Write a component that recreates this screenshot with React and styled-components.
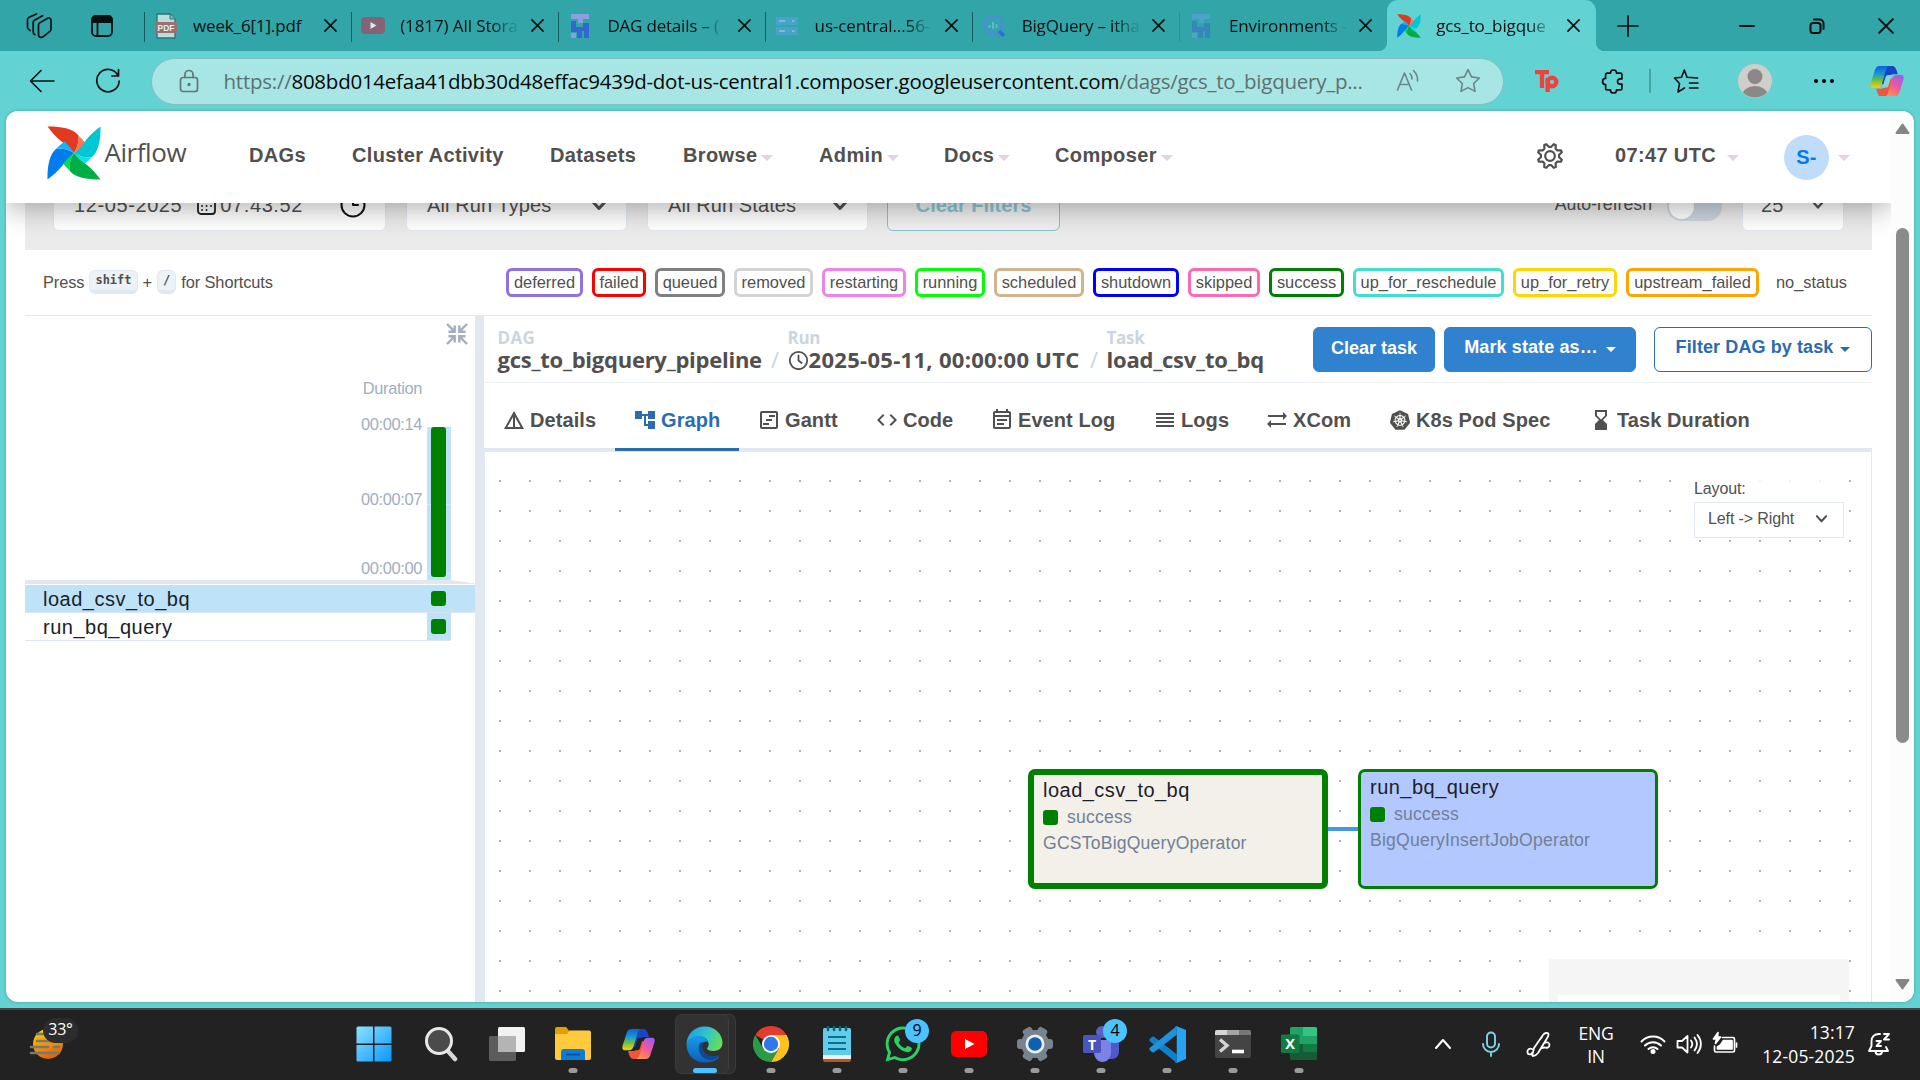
import React from "react";
import styled, { createGlobalStyle, css } from "styled-components";
import {
  MdDetails,
  MdAccountTree,
  MdCode,
  MdOutlineEventNote,
  MdReorder,
  MdSyncAlt,
  MdHourglassBottom,
  MdOutlineViewTimeline,
} from "react-icons/md";
import { SiKubernetes } from "react-icons/si";
import { FaWhatsapp } from "react-icons/fa";

const sans = `"Liberation Sans", Arial, sans-serif`;
const ui = `"Open Sans", "Noto Sans", sans-serif`;

const Global = createGlobalStyle`
  * { box-sizing: border-box; }
  html, body { margin: 0; overflow: hidden; background: #62d2d2; }
  svg { display: block; flex: none; }
`;

const Screen = styled.div`
  width: 1920px;
  height: 1080px;
  display: flex;
  flex-direction: column;
  background: #62d2d2;
  font-family: ${sans};
  color: #51504f;
  overflow: hidden;
  white-space: nowrap;
`;

const Cell = styled.div`
  width: ${(p) => p.$w}px;
  height: 100%;
  flex: none;
  display: flex;
  align-items: center;
  justify-content: center;
`;

/* ---------- browser chrome ---------- */

const TabStrip = styled.div`
  height: 51px;
  flex: none;
  display: flex;
  align-items: center;
  background: #31a5a8;
  font-family: ${ui};
  font-size: 17px;
  color: #0b0f10;
`;

const TabList = styled.div`
  display: flex;
  height: 100%;
  margin-left: 17.5px;
`;

const Tab = styled.div`
  width: ${(p) => (p.$active ? 209 : 207.2)}px;
  height: 51px;
  flex: none;
  display: flex;
  align-items: center;
  position: relative;
  ${(p) =>
    p.$active
      ? css`
          background: #62d2d2;
          border-radius: 11px 11px 0 0;
          &::before,
          &::after {
            content: "";
            position: absolute;
            bottom: 0;
            width: 9px;
            height: 9px;
          }
          &::before {
            left: -9px;
            background: radial-gradient(circle at 0 0, transparent 9px, #62d2d2 9.5px);
          }
          &::after {
            right: -9px;
            background: radial-gradient(circle at 100% 0, transparent 9px, #62d2d2 9.5px);
          }
        `
      : css`
          background: linear-gradient(${p.$faint ? "#2b8f93" : "#175a5e"}, ${p.$faint ? "#2b8f93" : "#175a5e"})
            no-repeat 0 12px / 1.4px 30px;
        `}
`;

const Favicon = styled.div`
  width: 24px;
  margin-left: 10px;
  display: flex;
  justify-content: center;
`;

const TabTitle = styled.div`
  width: 117px;
  margin-left: 15.5px;
  letter-spacing: ${(p) => p.$ls ?? 0}px;
  ${(p) => !p.$full && "mask-image: linear-gradient(90deg, #000 78%, rgba(0, 0, 0, 0.15) 97%);"}
`;

const TabClose = styled.div`
  width: 32px;
  margin-left: 4px;
  display: flex;
  justify-content: center;
`;

const Spacer = styled.div`
  flex: 1;
`;

const Toolbar = styled.div`
  height: 60px;
  flex: none;
  display: flex;
  align-items: center;
  color: #111;
`;

const Address = styled.div`
  width: 1353px;
  height: 47px;
  margin: 0 9px 0 19px;
  display: flex;
  align-items: center;
  background: #a8e6e5;
  border: 1.5px solid #86bdbd;
  border-radius: 24px;
  padding: 0 5px 0 11px;
`;

const Url = styled.div`
  flex: 1;
  margin-left: 8.5px;
  font-family: ${ui};
  font-size: 20.5px;
  letter-spacing: ${(p) => p.$ls}px;
  color: #5d7070;
  b {
    font-weight: 400;
    color: #050808;
  }
`;

const ToolDivider = styled.div`
  width: 2px;
  height: 24px;
  margin: 0 1px 0 2px;
  background: #48a3a3;
`;

/* ---------- page frame ---------- */

const Frame = styled.div`
  height: 891px;
  flex: none;
  margin: 0 6px;
  display: flex;
  background: #fff;
  border-radius: 12px;
  overflow: hidden;
  box-shadow: 0 0 3px rgba(0, 60, 60, 0.35);
`;

const Page = styled.div`
  width: 1885px;
  display: flex;
  flex-direction: column;
`;

const ScrollTrack = styled.div`
  width: 23px;
  position: relative;
  z-index: 3;
  background: #fcfcfc;
  display: flex;
  flex-direction: column;
  align-items: center;
  padding: 12px 0;
`;

const ScrollThumb = styled.div`
  width: 13px;
  height: 515px;
  margin: 94px 0 auto;
  border-radius: 7px;
  background: #8b8b8b;
`;

/* ---------- airflow nav ---------- */

const Nav = styled.div`
  height: 92px;
  flex: none;
  display: flex;
  align-items: center;
  position: relative;
  z-index: 2;
  background: #fff;
  box-shadow: 0 6px 26px rgba(0, 0, 0, 0.3);
  padding: 0 41px 3px;
  font-size: 20px;
  font-weight: 700;
  letter-spacing: 0.36px;
`;

const Brand = styled.div`
  width: 202px;
  margin-top: -6px;
  display: flex;
  align-items: center;
  font: 400 26px ${ui};
  letter-spacing: -0.45px;
  span {
    margin: -2px 0 0 3.5px;
  }
`;

const NavItem = styled.div`
  width: ${(p) => p.$w}px;
  display: flex;
  align-items: center;
`;

const Caret = styled.i`
  width: 0;
  height: 0;
  margin: ${(p) => p.$m ?? "5px 0 0 4px"};
  border: ${(p) => p.$s ?? 6}px solid transparent;
  border-top-color: ${(p) => p.$c ?? "#e2d2e2"};
  border-bottom: 0;
`;

const Gear = styled.div`
  margin-left: auto;
  margin-right: 51.5px;
`;

const Initials = styled.div`
  width: 45px;
  height: 45px;
  margin-top: 4px;
  border-radius: 50%;
  background: #bfdcfb;
  color: #017cee;
  display: flex;
  align-items: center;
  justify-content: center;
`;

/* ---------- filters ---------- */

const Filters = styled.div`
  height: 87px;
  flex: none;
  margin: -40px 19px 0;
  padding: 18px 28px 0;
  display: flex;
  gap: 20px;
  background: #ebebeb;
  font-size: 20px;
`;

const Field = styled.div`
  width: ${(p) => p.$w}px;
  height: 50px;
  flex: none;
  padding: 0 19px 2px ${(p) => p.$pl ?? 20}px;
  display: flex;
  align-items: center;
  background: #fff;
  border: 1px solid #e2e8f0;
  border-radius: 6px;
  letter-spacing: ${(p) => p.$ls ?? 0.1}px;
  svg:last-child {
    margin-left: auto;
  }
`;

const CalendarGap = styled.div`
  margin: 0 4px 0 15px;
`;

const ClearFilters = styled.div`
  width: 173px;
  height: 50px;
  margin-left: -1px;
  padding-bottom: 2px;
  display: flex;
  align-items: center;
  justify-content: center;
  border: 1px solid #88c3cf;
  border-radius: 6px;
  background: #f0f0f0;
  color: #88c8d6;
  font-weight: 700;
  font-size: 20px;
`;

const AutoRefresh = styled.div`
  margin-left: auto;
  height: 46px;
  display: flex;
  align-items: center;
  gap: 15px;
  font-size: 17.7px;
`;

const Toggle = styled.div`
  width: 55px;
  height: 29px;
  padding: 2px;
  margin-top: 4px;
  border-radius: 15px;
  background: #cbd5e0;
  &::before {
    content: "";
    display: block;
    width: 25px;
    height: 25px;
    border-radius: 50%;
    background: #fff;
  }
`;

/* ---------- legend ---------- */

const Legend = styled.div`
  height: 66px;
  flex: none;
  margin: 0 19px;
  padding: 0 0 1px 18px;
  display: flex;
  align-items: center;
  border-bottom: 1px solid #e2e8f0;
  font-size: 16.4px;
`;

const Shortcuts = styled.div`
  width: 463px;
  flex: none;
  display: flex;
  align-items: center;
  letter-spacing: -0.1px;
`;

const Key = styled.kbd`
  height: 24px;
  margin: 0 5px;
  padding: 0 5px;
  border-radius: 6px;
  background: #edf2f7;
  border: 1px solid #e2e8f0;
  border-bottom-width: 4px;
  font: 700 12px/18px "DejaVu Sans Mono", monospace;
  letter-spacing: 0;
`;

const Badges = styled.div`
  display: flex;
  gap: 9px;
`;

const Badge = styled.div`
  width: ${(p) => p.$w}px;
  height: 29px;
  flex: none;
  display: flex;
  align-items: center;
  justify-content: center;
  border: 3px solid ${(p) => p.$c};
  border-radius: 6px;
`;

/* ---------- body ---------- */

const Body = styled.div`
  flex: 1;
  min-height: 0;
  margin: 0 19px;
  display: flex;
`;

const GridPanel = styled.div`
  width: 450px;
  display: flex;
  flex-direction: column;
`;

const CollapseRow = styled.div`
  height: 30px;
  padding: 7px 7px 0 0;
  display: flex;
  justify-content: flex-end;
`;

const Chart = styled.div`
  height: 234px;
  padding-right: 24px;
  display: flex;
  justify-content: flex-end;
`;

const Axis = styled.div`
  padding: 32px 5px 0 0;
  text-align: right;
  font-size: 16.4px;
  line-height: 20px;
  letter-spacing: -0.35px;
  color: #a0aec0;
`;

const Tick = styled.div`
  margin-top: ${(p) => p.$mt}px;
`;

const BarColumn = styled.div`
  width: 24px;
  height: 153px;
  margin-top: 81px;
  padding-left: 4px;
  background: linear-gradient(#d3ebf9, #d3ebf9) 0 2px / 100% 1px no-repeat,
    linear-gradient(#d3ebf9, #d3ebf9) 0 77px / 100% 1px no-repeat,
    linear-gradient(#d3ebf9, #d3ebf9) 0 146px / 100% 1px no-repeat, #bee3f8;
`;

const Bar = styled.div`
  width: 15px;
  height: 150px;
  border-radius: 3px;
  background: #008000;
`;

const Rule = styled.div`
  height: 4px;
  margin-bottom: 1px;
  background: #e2e8f0;
  clip-path: polygon(0 0, 94.8% 0, 100% 90%, 100% 100%, 0 100%);
`;

const TaskRow = styled.div`
  width: ${(p) => (p.$selected ? 450 : 426)}px;
  height: 28px;
  padding: 0 ${(p) => (p.$selected ? 24 : 0)}px 0 18px;
  display: flex;
  align-items: center;
  justify-content: space-between;
  background: ${(p) => (p.$selected ? "#bee3f8" : "#fff")};
  border-bottom: 1px solid #dbe6f0;
  font-size: 20px;
  letter-spacing: 0.5px;
  color: #1a202c;
  span {
    margin-top: 2px;
  }
`;

const TaskCell = styled.div`
  width: 24px;
  height: 27px;
  padding-left: 4px;
  display: flex;
  align-items: center;
  background: #bee3f8;
`;

const Status = styled.i`
  width: 15px;
  height: 15px;
  border-radius: 3px;
  background: #008000;
`;

const Splitter = styled.div`
  width: 9px;
  background: #e2e8f0;
`;

const Details = styled.div`
  flex: 1;
  min-width: 0;
  display: flex;
  flex-direction: column;
`;

const Header = styled.div`
  height: 67px;
  flex: none;
  padding: 11px 0 0 13.5px;
  display: flex;
  border-bottom: 1px solid #edf2f7;
`;

const Crumb = styled.div`
  font-family: ${ui};
  font-weight: 700;
`;

const CrumbLabel = styled.div`
  font-size: 17px;
  line-height: 21px;
  letter-spacing: ${(p) => p.$ls ?? -0.3}px;
  color: #cbd5e0;
`;

const CrumbValue = styled.div`
  display: flex;
  align-items: center;
  font-size: 22px;
  line-height: 22px;
`;

const CrumbText = styled.div`
  width: ${(p) => p.$w}px;
  letter-spacing: ${(p) => p.$ls}px;
`;

const Slash = styled.div`
  width: 25px;
  text-align: center;
  font-weight: 400;
  color: #cbd5e0;
`;

const Actions = styled.div`
  margin-left: auto;
  display: flex;
`;

const Button = styled.div`
  width: ${(p) => p.$w}px;
  height: 45px;
  margin-left: ${(p) => p.$ml ?? 0}px;
  padding-bottom: ${(p) => p.$pb ?? 3}px;
  display: flex;
  align-items: center;
  justify-content: center;
  border-radius: 6px;
  border: 1.5px solid ${(p) => (p.$outline ? "#2b6cb0" : "#3182ce")};
  background: ${(p) => (p.$outline ? "#fff" : "#3182ce")};
  color: ${(p) => (p.$outline ? "#2b6cb0" : "#fff")};
  font-size: 18px;
  font-weight: 700;
  letter-spacing: ${(p) => p.$ls ?? 0}px;
`;

const Tabs = styled.div`
  height: 69px;
  flex: none;
  display: flex;
  box-shadow: inset 0 -4px #e2e8f0;
`;

const ViewTab = styled.div`
  width: ${(p) => p.$w}px;
  height: 68px;
  padding: 9px 0 0 18px;
  display: flex;
  align-items: center;
  gap: 4px;
  border-bottom: 3px solid ${(p) => (p.$active ? "#2b6cb0" : "transparent")};
  color: ${(p) => (p.$active ? "#2b6cb0" : "inherit")};
  font-size: 20px;
  font-weight: 700;
  letter-spacing: 0.08px;
`;

const TabIcon = styled.div`
  width: 24px;
  display: flex;
  justify-content: center;
`;

const Canvas = styled.div`
  flex: 1;
  position: relative;
  overflow: hidden;
  border: solid #e2e8f0;
  border-width: 0 1px;
  background: radial-gradient(circle, #b4b4b4 0.9px, transparent 1.3px) 0 14px / 30px 30px;
`;

const LayoutPicker = styled.div`
  position: absolute;
  right: 27px;
  top: 27px;
  width: 150px;
  font-size: 16px;
  line-height: 19px;
  letter-spacing: -0.12px;
  background: rgba(255, 255, 255, 0.85);
`;

const LayoutSelect = styled.div`
  height: 36px;
  margin-top: 4px;
  padding: 0 15px 3px 13px;
  display: flex;
  align-items: center;
  justify-content: space-between;
  background: #fff;
  border: 1px solid #e2e8f0;
`;

const Edge = styled.div`
  position: absolute;
  left: 841px;
  top: 375px;
  width: 34px;
  height: 4px;
  background: #4299e1;
`;

const Node = styled.div`
  position: absolute;
  left: ${(p) => p.$x}px;
  top: 317px;
  width: 300px;
  height: 120px;
  padding: ${(p) => p.$pad};
  border: ${(p) => p.$b}px solid #008000;
  border-radius: 7px;
  background: ${(p) => p.$bg};
  color: #718096;
  font-size: 17.6px;
  line-height: 26px;
  letter-spacing: 0.2px;
`;

const NodeTitle = styled.div`
  font-size: 20px;
  letter-spacing: 0.48px;
  line-height: 27px;
  color: #1a202c;
`;

const NodeStatus = styled.div`
  display: flex;
  align-items: center;
  gap: 9px;
`;

const MiniMap = styled.div`
  position: absolute;
  right: 22px;
  bottom: 0;
  width: 300px;
  height: 43px;
  padding: 36px 9px 0;
  background: #f5f5f5;
  &::before {
    content: "";
    display: block;
    height: 7px;
    background: #fff;
  }
`;

/* ---------- taskbar ---------- */

const Gutter = styled.div`
  height: 6px;
  flex: none;
`;

const Taskbar = styled.div`
  height: 72px;
  flex: none;
  display: flex;
  align-items: center;
  background: #222;
  box-shadow: inset 0 2px #444;
  color: #fff;
  font-family: ${ui};
  font-size: 17.5px;
`;

const Weather = styled.div`
  width: 342px;
  height: 100%;
  padding: 17px 0 0 29px;
  position: relative;
`;

const Temp = styled.div`
  position: absolute;
  left: 43px;
  top: 10px;
  width: 35px;
  height: 25px;
  border-radius: 13px;
  background: #2c2c2c;
  font-size: 16px;
  line-height: 23px;
  letter-spacing: -0.2px;
  text-align: center;
`;

const Launcher = styled.div`
  width: 66px;
  height: 72px;
  padding-right: ${(p) => p.$nudge ?? 0}px;
  display: flex;
  align-items: center;
  justify-content: center;
  position: relative;
`;

const Focus = styled.div`
  width: 54px;
  height: 60px;
  margin: 0 0 0 -7px;
  padding-left: 6px;
  display: flex;
  align-items: center;
  justify-content: center;
  border-radius: 7px;
  background: #323232;
  border: 1px solid #3d3d3d;
  box-shadow: 7px 0 0 -1px #2d2d2d, 7px 0 0 0 #3a3a3a;
`;

const Dot = styled.i`
  position: absolute;
  left: 50%;
  bottom: 7px;
  width: ${(p) => (p.$wide ? 24 : 9)}px;
  height: 5px;
  transform: translateX(-50%);
  border-radius: 3px;
  background: ${(p) => (p.$wide ? "#4cc2ff" : "#9a9a9a")};
`;

const Count = styled.div`
  position: absolute;
  left: 35px;
  top: 11px;
  width: 24px;
  height: 24px;
  border-radius: 50%;
  background: #4cc2ff;
  color: #000;
  font-size: 16px;
  line-height: 23px;
  text-align: center;
`;

const TrayText = styled.div`
  width: ${(p) => p.$w}px;
  flex: none;
  text-align: ${(p) => p.$align};
  line-height: ${(p) => p.$lh ?? 24}px;
  margin-top: ${(p) => p.$mt ?? -1}px;
  letter-spacing: ${(p) => p.$ls ?? -0.2}px;
`;

/* ---------- drawings ---------- */

const Line = ({ s = 24, w = 1.6, c = "currentColor", vb = 24, children, f = "none" }) => (
  <svg width={s} height={s} viewBox={`0 0 ${vb} ${vb}`} fill={f} stroke={c} strokeWidth={w} strokeLinecap="round" strokeLinejoin="round">
    {children}
  </svg>
);

const Cross = ({ s = 13, w = 1.7 }) => (
  <Line s={s} vb={14} w={w}>
    <path d="M1 1l12 12M13 1L1 13" />
  </Line>
);

const Chevron = ({ s = 14, w = 2.6 }) => (
  <Line s={s} vb={14} w={w}>
    <path d="M2 4.5l5 5.500 5-5.500" />
  </Line>
);

const Pinwheel = ({ s = 54 }) => (
  <svg width={s} height={s} viewBox="0 0 54 54">
    {[
      ["#e43921", "#ff7557", 0],
      ["#00c7d4", "#11e1ee", 90],
      ["#00ad46", "#04d659", 180],
      ["#017cee", "#0cb6ff", 270],
    ].map(([a, b, r]) => (
      <g key={r} transform={`rotate(${r} 27 27)`}>
        <path fill={a} d="M.5.5C12 .3 26 2 31.500 9.500 32 16 30 23 27 27 23 22 19 17.500 14.500 15.500 9 11 4 5.500.5.5z" />
        <path fill={b} d="M31.500 9.500C34 12 37 15 38.500 17.500 36 21 31 24 27 27 30 22 32 16 31.500 9.500z" />
      </g>
    ))}
  </svg>
);

const PdfIcon = () => (
  <svg width="24" height="26" viewBox="0 0 24 26">
    <path d="M3 1h13l5 5v19H3z" fill="#b9dedb" stroke="#2d7477" strokeWidth="1.300" />
    <path d="M16 1v5h5" fill="#7fb8b8" stroke="#2d7477" strokeWidth="1" />
    <rect x="1" y="9" width="22" height="11" rx="1" fill="#9d6f72" />
    <text x="12" y="17.700" textAnchor="middle" fontFamily="Liberation Sans" fontWeight="700" fontSize="8.500" fill="#e0f0ee">PDF</text>
  </svg>
);

const YtTab = () => (
  <svg width="24" height="17" viewBox="0 0 24 17">
    <rect width="24" height="17" rx="4" fill="#856377" />
    <path d="M9.500 5l6 3.500-6 3.500z" fill="#d5eceb" />
  </svg>
);

const ComposerIcon = ({ a = "#8b9fe0", b = "#3468cf" }) => (
  <svg width="20" height="26" viewBox="0 0 20 26">
    <path d="M1 1h18v5h-6v4H8V6H1z" fill={a} />
    <path d="M1 8h5v6h7v-4h6v15h-5v-7h-2v7H7v-6H1z" fill={b} />
    <rect x="1" y="20" width="5" height="5" fill={a} />
  </svg>
);

const StorageIcon = () => (
  <svg width="24" height="20" viewBox="0 0 24 20">
    <rect x="1" y="1" width="22" height="8" fill="#4aa2c8" />
    <rect x="1" y="11" width="22" height="8" fill="#4aa2c8" />
    <path d="M4 5h6M17 5h2.500M4 15h6M17 15h2.500" stroke="#77bfd6" strokeWidth="1.800" />
  </svg>
);

const BigQueryIcon = () => (
  <svg width="24" height="24" viewBox="0 0 24 24">
    <circle cx="11" cy="11" r="9" fill="none" stroke="#4e8ade" strokeWidth="2.400" />
    <path d="M7.500 11v3M11 8v7M14.500 10v4" stroke="#69b0dc" strokeWidth="2" />
    <path d="M17 17l5 5" stroke="#2f6bd6" strokeWidth="3.500" />
  </svg>
);

const Copilot = ({ s = 34, id }) => (
  <svg width={s} height={s * 0.91} viewBox="0 0 34 34" preserveAspectRatio="none">
    <defs>
      <linearGradient id={`${id}a`} x1="0" y1="0" x2="0" y2="1">
        <stop offset="0" stopColor="#0f5fd8" />
        <stop offset=".35" stopColor="#1697d8" />
        <stop offset=".65" stopColor="#6fc03e" />
        <stop offset="1" stopColor="#ffce12" />
      </linearGradient>
      <linearGradient id={`${id}b`} x1=".8" y1="0" x2=".2" y2="1">
        <stop offset="0" stopColor="#a05bf0" />
        <stop offset=".5" stopColor="#f0589b" />
        <stop offset="1" stopColor="#ff9b3e" />
      </linearGradient>
    </defs>
    <path d="M9 0h13c3 0 4 3 5 6l.7 3H23c-2 0-3 1-3.600 3l-2.400 8H8c2 0 2.500-2 3-4z" fill="#1746c4" />
    <path d="M24 34H12c-3 0-4-3-5-6l-.7-3H11c2 0 3-1 3.600-3l2.400-8h9z" fill="#f0563c" />
    <path d="M14.500 22l3.800-12h2.200l-3.800 12c-.4 1.500-1.200 2-2.700 2z" fill="#62d2d2" opacity="0" />
    <path d="M10 0h9c-2 1-2.600 3-3.200 5l-4 15c-.8 2.500-2 4-4.500 4H3C0 24 0 21 .8 18L5 4c1-3 2.500-4 5-4z" fill={`url(#${id}a)`} />
    <path d="M24 34h-9c2-1 2.600-3 3.200-5l4-15c.8-2.500 2-4 4.500-4H31c3 0 3 3 2.200 6L29 30c-1 3-2.500 4-5 4z" fill={`url(#${id}b)`} />
    <path d="M15.500 12.500c.4-1.500 1.200-2.500 2.700-2.500h3.500l-3.200 11.500c-.4 1.500-1.200 2.500-2.700 2.500h-3.500z" fill={id === "tb" ? "#222" : "#7ed9da"} />
  </svg>
);

const NavGear = () => {
  const pts = Array.from({ length: 32 }, (_, i) => {
    const k = i % 4;
    const r = k === 0 || k === 1 ? 12.4 : 9.2;
    const off = [-0.09, 0.09, -0.13, 0.13][k];
    const a = (Math.floor(i / 4) * Math.PI) / 4 + (k > 1 ? Math.PI / 8 : 0) + off - (Math.PI * 5) / 8;
    return `${14 + r * Math.cos(a)},${14 + r * Math.sin(a)}`;
  }).join(" ");
  return (
    <svg width="28" height="28" viewBox="0 0 28 28" fill="none" stroke="#51504f" strokeWidth="2.200" strokeLinejoin="round">
      <polygon points={pts} />
      <circle cx="14" cy="14" r="4.800" />
    </svg>
  );
};

const CollapseIcon = () => (
  <svg width="22" height="22" viewBox="0 0 22 22" fill="none" stroke="#a0aec0" strokeWidth="2.400">
    {[0, 90, 180, 270].map((r) => (
      <path key={r} transform={`rotate(${r} 11 11)`} d="M1 1l7 7M2.500 8.700h6.200V2.500" />
    ))}
  </svg>
);

const WeatherIcon = () => (
  <svg width="36" height="36" viewBox="0 0 36 36">
    <defs>
      <linearGradient id="sun" x1=".2" y1="0" x2=".6" y2="1">
        <stop offset="0" stopColor="#ffd000" />
        <stop offset="1" stopColor="#e0600a" />
      </linearGradient>
    </defs>
    <circle cx="19" cy="19" r="15" fill="url(#sun)" />
    <path d="M8 9h14M8 16h14M2 22h17M25 22h5M2 28h28" stroke="#777" strokeWidth="2.600" strokeLinecap="round" />
  </svg>
);

const StartIcon = () => (
  <svg width="36" height="36" viewBox="0 0 36 36">
    <defs>
      <linearGradient id="win" x1="0" y1="0" x2="1" y2="1">
        <stop offset="0" stopColor="#8be3ff" />
        <stop offset="1" stopColor="#0a95ff" />
      </linearGradient>
    </defs>
    <path fill="url(#win)" d="M2 .5h15v17H.5V2A1.500 1.500 0 0 1 2 .5zM18.500.5H34A1.500 1.500 0 0 1 35.500 2v15.500h-17zM.5 19H17v16.500H2A1.500 1.500 0 0 1 .5 34zM18.500 19h17v15a1.500 1.500 0 0 1-1.500 1.500H18.500z" />
  </svg>
);

const SearchIcon = () => (
  <svg width="34" height="36" viewBox="0 0 34 36">
    <path d="M23 24l8 9" stroke="#d5d8dc" strokeWidth="4.500" strokeLinecap="round" />
    <circle cx="15" cy="15" r="12.500" fill="#4b4b4b" stroke="#e8e8e8" strokeWidth="3" />
  </svg>
);

const TaskViewIcon = () => (
  <svg width="36" height="36" viewBox="0 0 36 36">
    <rect x="0" y="10" width="27" height="25" rx="1.500" fill="#5c5c5c" />
    <rect x="9" y="1" width="27" height="25" rx="1.500" fill="#f2f2f2" />
    <rect x="9" y="10" width="18" height="16" fill="#b4b4b4" />
  </svg>
);

const ExplorerIcon = () => (
  <svg width="36" height="34" viewBox="0 0 36 34">
    <path d="M0 2a2 2 0 0 1 2-2h9l3 3.500V9H0z" fill="#e0a000" />
    <path d="M0 7h12l2.500-3.500H34a2 2 0 0 1 2 2V31a2 2 0 0 1-2 2H2a2 2 0 0 1-2-2z" fill="#ffcb3d" />
    <path d="M6 33v-8a3 3 0 0 1 3-3h18a3 3 0 0 1 3 3v8z" fill="#0f7bd4" />
    <path d="M11 27.500h14" stroke="#0a4f92" strokeWidth="1.800" />
  </svg>
);

const EdgeIcon = () => (
  <svg width="37" height="37" viewBox="0 0 37 37">
    <defs>
      <linearGradient id="eg" x1="0" y1=".3" x2="1" y2=".6">
        <stop offset="0" stopColor="#1f9fe0" />
        <stop offset=".5" stopColor="#2fc3cf" />
        <stop offset="1" stopColor="#6ae04e" />
      </linearGradient>
      <linearGradient id="eb" x1="0" y1="0" x2="0" y2="1">
        <stop offset="0" stopColor="#1a9be6" />
        <stop offset="1" stopColor="#0b5fb8" />
      </linearGradient>
    </defs>
    <path d="M.5 18C1 7 9 .5 18.500.5 29 .5 36.500 8 36.500 17c0 5-4 8-9 8-4 0-6.500-1.200-6.500-2.500 0-1 1.500-2 1.500-4.500 0-4-4-7.500-9-7.500C7 10.500 2 14 .5 18z" fill="url(#eg)" />
    <path d="M.5 18C2 13.500 7 10 12.500 10c5 0 9.500 3.500 9.500 7-3-2.500-8-.5-8 6 0 7 8 12.500 16 8.500 2-1 3.500-1.500 3 0-3 3-8 5-14 5C8 36.500.5 29 .5 18z" fill="url(#eb)" />
    <path d="M14 17c-4 8 2 17 11 17 4-.5 7.500-2.500 8.500-5-8 2.500-16 0-17-7 0-2 .3-4 2-5.500-1.500-.3-3.500 0-4.500.5z" fill="#0e4a94" />
    <path d="M20.500 15.500c-3.500 0-5 4-4 7 1.500 5 8 8 15 6 1.500-1 2.800-2.500 3.500-4.500-2 1.200-4.500 1.700-7.500 1.700-4 0-6.500-1.200-6.500-3 0-1.200 1.500-2 1.500-4.700-.3-1.200-1-2.200-2-2.500z" fill="#323232" />
  </svg>
);

const ChromeIcon = () => (
  <svg width="36" height="36" viewBox="0 0 36 36">
    <path d="M18 18L2.400 9A18 18 0 0 1 33.600 9z" fill="#e33b2e" />
    <path d="M18 9h15.600A18 18 0 0 1 18 36l7.800-13.500z" fill="#fcc31e" />
    <path d="M10.200 22.500L2.400 9A18 18 0 0 0 18 36l7.800-13.500z" fill="#2d9a46" />
    <circle cx="18" cy="18" r="9" fill="#fff" />
    <circle cx="18" cy="18" r="7.200" fill="#2f77ea" />
  </svg>
);

const NotepadIcon = () => (
  <svg width="28" height="36" viewBox="0 0 28 36">
    <rect y="2" width="28" height="30" rx="1.500" fill="#62cdeb" />
    <rect y="29" width="28" height="4" fill="#eee" />
    <path d="M0 33h28v1a2 2 0 0 1-2 2H2a2 2 0 0 1-2-2z" fill="#b9570c" />
    <path d="M5 1v3M11 1v3M17 1v3M23 1v3" stroke="#13607c" strokeWidth="2.600" strokeLinecap="round" />
    <path d="M5 11h18M5 17h18M5 23h18" stroke="#0e6c8c" strokeWidth="2" />
  </svg>
);

const YoutubeIcon = () => (
  <svg width="36" height="26" viewBox="0 0 36 26">
    <rect width="36" height="26" rx="5" fill="#f00" />
    <path d="M14 8l9.500 5-9.500 5z" fill="#fff" />
  </svg>
);

const SettingsIcon = () => (
  <svg width="36" height="36" viewBox="0 0 36 36">
    {[0, 60, 120].map((r) => (
      <rect key={r} x="13" y="0" width="10" height="36" rx="3" fill="#78838d" transform={`rotate(${r + 30} 18 18)`} />
    ))}
    <circle cx="18" cy="18" r="14" fill="#78838d" />
    <circle cx="18" cy="18" r="9.500" fill="#e8edf1" />
    <circle cx="18" cy="18" r="6.800" fill="#0c62b0" />
  </svg>
);

const TeamsIcon = () => (
  <svg width="36" height="36" viewBox="0 0 36 36">
    <circle cx="19" cy="6" r="6" fill="#5a62c9" />
    <path d="M24 14h12v11c0 5-3 8-7 8h-5z" fill="#5059c9" />
    <path d="M11 14h17v12c0 6-4 10-8.500 10S11 32 11 26z" fill="#7b83eb" />
    <rect y="9" width="18" height="18" rx="1.500" fill="#4b53bc" />
    <text x="9" y="23.500" textAnchor="middle" fontFamily="Open Sans" fontWeight="700" fontSize="14" fill="#fff">T</text>
  </svg>
);

const VsCodeIcon = () => (
  <svg width="37" height="37" viewBox="0 0 36 36">
    <path d="M.8 12.500l2.400-2c.6-.4 1.200-.4 1.700 0L27 27.500V36L.8 14.800c-.7-.6-.7-1.700 0-2.300z" fill="#0e7fcb" />
    <path d="M.8 23.500l2.400 2c.6.4 1.200.4 1.700 0L27 8.500V0L.8 21.200c-.7.6-.7 1.700 0 2.300z" fill="#1b94dd" />
    <path d="M26.500 0L36 4v28l-9.500 4c-.5 0-1 0-1.500-.7 1 .5 2-.1 2-1.300V2c0-1.200-1-1.800-2-1.300.5-.6 1-.7 1.500-.7z" fill="#27a3f3" />
  </svg>
);

const TerminalIcon = () => (
  <svg width="36" height="28" viewBox="0 0 36 28">
    <rect width="36" height="28" rx="2" fill="#444" />
    <path d="M2 0h10v5H0V2a2 2 0 0 1 2-2z" fill="#d5d5d5" />
    <path d="M12 0h12v5H12z" fill="#a5a5a5" />
    <path d="M24 0h10a2 2 0 0 1 2 2v3H24z" fill="#777" />
    <path d="M5 9.500l7 6-7 6" fill="none" stroke="#d2d2d2" strokeWidth="3.400" />
    <path d="M17 21.500h12" stroke="#fff" strokeWidth="3.600" />
  </svg>
);

const ExcelIcon = () => (
  <svg width="36" height="34" viewBox="0 0 36 34">
    <rect x="9" width="27" height="33" rx="1.500" fill="#185c37" />
    <path d="M9 1.500A1.500 1.500 0 0 1 10.500 0H22v17H9z" fill="#21a366" />
    <path d="M22 0h12.500A1.500 1.500 0 0 1 36 1.500V9H22z" fill="#33c481" />
    <path d="M22 9h14v8H22z" fill="#21a366" />
    <path d="M22 17h14v8H22z" fill="#107c41" />
    <rect y="7.500" width="18.500" height="18.500" rx="1.500" fill="#107c41" />
    <text x="9.200" y="22" textAnchor="middle" fontFamily="Open Sans" fontWeight="700" fontSize="14.500" fill="#fff">X</text>
  </svg>
);

const Person = () => (
  <svg width="34" height="34" viewBox="0 0 34 34">
    <defs>
      <clipPath id="pc"><circle cx="17" cy="17" r="16.500" /></clipPath>
    </defs>
    <circle cx="17" cy="17" r="17" fill="#d0cecb" />
    <g clipPath="url(#pc)" fill="#8b8886">
      <circle cx="17" cy="12.500" r="7.500" />
      <ellipse cx="17" cy="32" rx="13" ry="10" />
    </g>
  </svg>
);

/* ---------- data ---------- */

const browserTabs = [
  { t: "week_6[1].pdf", icon: <PdfIcon />, full: true, ls: -0.15 },
  { t: "(1817) All Stora", icon: <YtTab />, ls: -0.1 },
  { t: "DAG details – (", icon: <ComposerIcon /> },
  { t: "us-central...56-", icon: <StorageIcon />, ls: -0.1 },
  { t: "BigQuery – itha", icon: <BigQueryIcon /> },
  { t: "Environments -", icon: <ComposerIcon a="#4ba3c9" b="#3486bd" />, faint: true, ls: -0.1 },
  { t: "gcs_to_bigque", icon: <Pinwheel s={24} />, active: true, ls: -0.1 },
];

const navItems = [
  ["DAGs", 103],
  ["Cluster Activity", 198],
  ["Datasets", 133],
  ["Browse", 136, true],
  ["Admin", 125, true],
  ["Docs", 111, true],
  ["Composer", 130, true],
];

const states = [
  ["deferred", 77, "#9370db"],
  ["failed", 54, "#ff0000"],
  ["queued", 70, "#808080"],
  ["removed", 79, "#d3d3d3"],
  ["restarting", 84, "#ee82ee"],
  ["running", 70, "#00ff00"],
  ["scheduled", 90, "#d2b48c"],
  ["shutdown", 86, "#0000ff"],
  ["skipped", 72, "#ff69b4"],
  ["success", 75, "#008000"],
  ["up_for_reschedule", 151, "#40e0d0"],
  ["up_for_retry", 104, "#ffd700"],
  ["upstream_failed", 133, "#ffa500"],
  ["no_status", 87, "transparent"],
];

const viewTabs = [
  ["Details", 131, MdDetails],
  ["Graph", 124, MdAccountTree, { active: true }],
  ["Gantt", 118, MdOutlineViewTimeline],
  ["Code", 115, MdCode],
  ["Event Log", 163, MdOutlineEventNote],
  ["Logs", 112, MdReorder],
  ["XCom", 123, MdSyncAlt],
  ["K8s Pod Spec", 201, SiKubernetes, { size: 20 }],
  ["Task Duration", 198, MdHourglassBottom],
];

const apps = [
  { icon: <StartIcon />, off: true, nudge: 3 },
  { icon: <SearchIcon />, off: true },
  { icon: <TaskViewIcon />, off: true },
  { icon: <ExplorerIcon /> },
  { icon: <Copilot s={33} id="tb" />, off: true, nudge: 1 },
  { icon: <EdgeIcon />, focus: true },
  { icon: <ChromeIcon /> },
  { icon: <NotepadIcon /> },
  { icon: <FaWhatsapp size={40} color="#25d366" />, n: 9 },
  { icon: <YoutubeIcon /> },
  { icon: <SettingsIcon /> },
  { icon: <TeamsIcon />, n: 4 },
  { icon: <VsCodeIcon /> },
  { icon: <TerminalIcon /> },
  { icon: <ExcelIcon /> },
];

/* ---------- sections ---------- */

const BrowserChrome = () => (
  <>
    <TabStrip>
      <Cell $w={78}>
        <Line s={26} w={1.7} vb={26}>
          <path d="M12.500 12c0-1 .4-1.600 1.200-2.100l7.500-4.500C23 4.300 25 5.300 25 7.500v8.600c0 1-.4 1.700-1.100 2.300l-6.900 5.400c-2 1.400-4.500.4-4.500-2z" />
          <path d="M9 21.700c-1.300-.6-1.800-1.500-1.800-2.800V9.500c0-1 .4-1.800 1.200-2.300L16.500 2.700" />
          <path d="M4 17.500c-1.600-.8-2.500-1.700-2.500-3.200V6.800c0-1 .4-1.700 1.200-2.200L10.500 1" />
        </Line>
      </Cell>
      <Cell $w={48}>
        <Line s={24} w={1.8} vb={24}>
          <rect x="2" y="2" width="20" height="20" rx="4" />
          <path d="M2 6.500V6a4 4 0 0 1 4-4h12a4 4 0 0 1 4 4v2H2z" fill="currentColor" />
          <path d="M7.500 8v14" />
        </Line>
      </Cell>
      <TabList>
        {browserTabs.map((b) => (
          <Tab key={b.t} $active={b.active} $faint={b.faint}>
            <Favicon>{b.icon}</Favicon>
            <TabTitle $full={b.full} $ls={b.ls ?? -0.2}>{b.t}</TabTitle>
            <TabClose><Cross /></TabClose>
          </Tab>
        ))}
      </TabList>
      <Cell $w={64}>
        <Line s={22} vb={22} w={1.7}><path d="M11 1v20M1 11h20" /></Line>
      </Cell>
      <Spacer />
      <Cell $w={70}><Line s={16} vb={16} w={2}><path d="M1 8h14" /></Line></Cell>
      <Cell $w={69}>
        <Line s={16} vb={16} w={2}>
          <rect x="1.500" y="5" width="10" height="10" rx="2.500" />
          <path d="M5 1.500h5.500a4 4 0 0 1 4 4V11" />
        </Line>
      </Cell>
      <Cell $w={69}><Cross s={16} w={1.8} /></Cell>
    </TabStrip>
    <Toolbar>
      <Cell $w={84}><Line s={26} vb={26}><path d="M25 13H2M12 2.500L1.500 13 12 23.500" /></Line></Cell>
      <Cell $w={48}>
        <Line s={26} vb={26} w={1.7}>
          <path d="M23 7.500A11.200 11.200 0 1 0 24.200 13M23.500 1.500v6.500h-6.500" />
        </Line>
      </Cell>
      <Address>
        <Cell $w={52}>
          <Line s={24} vb={24} c="#5f7777" w={1.7}>
            <rect x="3.500" y="8.500" width="17" height="14" rx="2.500" />
            <path d="M8 8.500V5.500a4 4 0 0 1 8 0v3" />
            <circle cx="12" cy="15.500" r=".8" fill="#5f7777" />
          </Line>
        </Cell>
        <Url $ls={-0.25}>
          https://<b>808bd014efaa41dbb30d48effac9439d-dot-us-central1.composer.googleusercontent.com</b>/dags/gcs_to_bigquery_p...
        </Url>
        <Cell $w={60}>
          <Line s={24} vb={24} c="#6b8787" w={1.6}>
            <path d="M1.500 21L8.500 4l7 17M4 15.500h9M14 4.500c1.500 1.600 2 3.500 2 5.500M17.500 1.500c3 3 4.500 6 4 10.500" />
          </Line>
        </Cell>
        <Cell $w={60}>
          <Line s={26} vb={24} c="#6b8787" w={1.5}>
            <path d="M12 1.500l3.200 6.700 7.300 1-5.300 5.100 1.300 7.300-6.500-3.500-6.500 3.500 1.300-7.300L1.500 9.200l7.300-1z" />
          </Line>
        </Cell>
      </Address>
      <Cell $w={67}>
        <svg width="24" height="24" viewBox="0 0 24 24" fill="none" stroke="#f2403c" strokeWidth="4.300">
          <path d="M0 3.200h14M7 2v17" />
          <circle cx="17" cy="13" r="4.300" />
          <path d="M12.700 9v14" />
        </svg>
      </Cell>
      <Cell $w={67}>
        <Line s={27} vb={24} w={1.5}>
          <path d="M9.300 4.500a2.700 2.700 0 0 1 5.400 0H18A1.500 1.500 0 0 1 19.500 6v3.600H18a2.400 2.400 0 0 0 0 4.800h1.500V18a1.500 1.500 0 0 1-1.500 1.500h-3.300a2.700 2.700 0 0 1-5.400 0H6.500A1.500 1.500 0 0 1 5 18v-3.300a2.700 2.700 0 0 1 0-5.400V6a1.500 1.500 0 0 1 1.500-1.500z" />
        </Line>
      </Cell>
      <ToolDivider />
      <Cell $w={68}>
        <Line s={26} vb={26} w={1.6}>
          <path d="M14 9.200L11.300 2 8.500 9.200 1.500 10l5 5.500L5 24l6.500-4M14 9.200l10.500.8M16.500 15H25M16.500 20H25" />
        </Line>
      </Cell>
      <Cell $w={70}><Person /></Cell>
      <Cell $w={68}>
        <svg width="22" height="6" viewBox="0 0 22 6"><circle cx="3" cy="3" r="2" /><circle cx="11" cy="3" r="2" /><circle cx="19" cy="3" r="2" /></svg>
      </Cell>
      <Cell $w={58}><Copilot id="tl" /></Cell>
    </Toolbar>
  </>
);

const AirflowNav = () => (
  <Nav>
    <Brand><Pinwheel /><span>Airflow</span></Brand>
    {navItems.map(([t, w, caret]) => (
      <NavItem key={t} $w={w}>{t}{caret && <Caret />}</NavItem>
    ))}
    <Gear><NavGear /></Gear>
    <NavItem $w={169}>07:47 UTC<Caret $m="5px 0 0 11px" /></NavItem>
    <Initials>S-</Initials>
    <Caret $m="5px 0 0 9px" />
  </Nav>
);

const FilterBar = () => (
  <Filters>
    <Field $w={333} $ls={0.6}>
      12-05-2025
      <CalendarGap>
        <Line s={19} vb={19} w={1.8} c="#222">
          <rect x="1" y="1" width="17" height="17" rx="3" />
          <path d="M1 6h17M5 10h.1M9.500 10h.1M14 10h.1M5 14h.1M9.500 14h.1" />
        </Line>
      </CalendarGap>
      07:43:52
      <Line s={26} vb={26} w={2} c="#111"><circle cx="13" cy="13" r="11.500" /><path d="M13 6v7h5" /></Line>
    </Field>
    <Field $w={221}>All Run Types<Chevron s={16} /></Field>
    <Field $w={221}>All Run States<Chevron s={16} /></Field>
    <ClearFilters>Clear Filters</ClearFilters>
    <AutoRefresh>Auto-refresh<Toggle /></AutoRefresh>
    <Field $w={102} $pl={18}>25<Chevron s={12} /></Field>
  </Filters>
);

const StateLegend = () => (
  <Legend>
    <Shortcuts>
      Press<Key>shift</Key>+<Key>/</Key>for Shortcuts
    </Shortcuts>
    <Badges>
      {states.map(([t, w, c]) => <Badge key={t} $w={w} $c={c}>{t}</Badge>)}
    </Badges>
  </Legend>
);

const Grid = () => (
  <GridPanel>
    <CollapseRow><CollapseIcon /></CollapseRow>
    <Chart>
      <Axis>
        <Tick $mt={0}>Duration</Tick>
        <Tick $mt={16}>00:00:14</Tick>
        <Tick $mt={55}>00:00:07</Tick>
        <Tick $mt={49}>00:00:00</Tick>
      </Axis>
      <BarColumn><Bar /></BarColumn>
    </Chart>
    <Rule />
    <TaskRow $selected><span>load_csv_to_bq</span><TaskCell><Status /></TaskCell></TaskRow>
    <TaskRow><span>run_bq_query</span><TaskCell><Status /></TaskCell></TaskRow>
  </GridPanel>
);

const DetailsPanel = () => (
  <Details>
    <Header>
      <Crumb>
        <CrumbLabel $ls={0.3}>DAG</CrumbLabel>
        <CrumbValue><CrumbText $w={265} $ls={-0.25}>gcs_to_bigquery_pipeline</CrumbText><Slash>/</Slash></CrumbValue>
      </Crumb>
      <Crumb>
        <CrumbLabel>Run</CrumbLabel>
        <CrumbValue>
          <Line s={21} vb={21} w={1.8}><circle cx="10.500" cy="11.500" r="8.700" /><path d="M10.500 6.500v5l3 2.500" /></Line>
          <CrumbText $w={273} $ls={0.3}>2025-05-11, 00:00:00 UTC</CrumbText>
          <Slash>/</Slash>
        </CrumbValue>
      </Crumb>
      <Crumb>
        <CrumbLabel>Task</CrumbLabel>
        <CrumbValue><CrumbText $w={156} $ls={-0.22}>load_csv_to_bq</CrumbText></CrumbValue>
      </Crumb>
      <Actions>
        <Button $w={122}>Clear task</Button>
        <Button $w={192} $ml={9} $pb={5} $ls={0.1}>Mark state as…<Caret $s={5} $c="#fff" $m="4px 0 0 8px" /></Button>
        <Button $w={218} $ml={18} $pb={5} $ls={0.1} $outline>Filter DAG by task<Caret $s={5} $c="#2b6cb0" $m="4px 0 0 7px" /></Button>
      </Actions>
    </Header>
    <Tabs>
      {viewTabs.map(([t, w, Icon, o]) => (
        <ViewTab key={t} $w={w} $active={o?.active}>
          <TabIcon><Icon size={o?.size ?? 24} /></TabIcon>
          {t}
        </ViewTab>
      ))}
    </Tabs>
    <Canvas>
      <LayoutPicker>
        Layout:
        <LayoutSelect>Left -&gt; Right<Chevron s={13} w={2.2} /></LayoutSelect>
      </LayoutPicker>
      <Edge />
      <Node $x={543} $b={6} $bg="#f3f0ea" $pad="2px 9px">
        <NodeTitle>load_csv_to_bq</NodeTitle>
        <NodeStatus><Status />success</NodeStatus>
        GCSToBigQueryOperator
      </Node>
      <Node $x={873} $b={3} $bg="#b3c8ff" $pad="2px 9px">
        <NodeTitle>run_bq_query</NodeTitle>
        <NodeStatus><Status />success</NodeStatus>
        BigQueryInsertJobOperator
      </Node>
      <MiniMap />
    </Canvas>
  </Details>
);

const SystemBar = () => (
  <Taskbar>
    <Weather><WeatherIcon /><Temp>33°</Temp></Weather>
    {apps.map((a, i) => (
      <Launcher key={i} $nudge={a.nudge}>
        {a.focus ? <Focus>{a.icon}</Focus> : a.icon}
        {!a.off && <Dot $wide={a.focus} />}
        {a.n && <Count>{a.n}</Count>}
      </Launcher>
    ))}
    <Spacer />
    <Cell $w={36}><Line s={18} vb={18} w={2.1}><path d="M2 13l7-8 7 8" /></Line></Cell>
    <Cell $w={60}>
      <Line s={26} vb={26} w={1.9} c="#7fd4ec"><rect x="9" y="1.500" width="8" height="15" rx="4" /><path d="M5 13a8 8 0 0 0 16 0M13 21v4" /></Line>
    </Cell>
    <Cell $w={36}>
      <Line s={26} vb={26} w={1.8}>
        <path d="M8 17L17 4c1.500-2 5-3 5.500-1S21 7 20 9l-8 13c-1.500 2-4 3-5 3s-.5-2 0-4zM16 6l-4 5M6 18c-3-1-5 1-4.500 3.500S5 24 6 22M18 12c3-1 5.500-1 5.500 2s-3 3-5 2.500l-3 .5" />
      </Line>
    </Cell>
    <TrayText $w={78} $align="center" $lh={23} $mt={1}>ENG<br />IN</TrayText>
    <Cell $w={36}>
      <Line s={26} vb={26} w={2}><path d="M1.500 10.500a16 16 0 0 1 23 0M5 14.500a11.500 11.500 0 0 1 16 0M8.500 18a6.500 6.500 0 0 1 9 0" /><circle cx="13" cy="20.500" r="1.500" fill="#fff" /></Line>
    </Cell>
    <Cell $w={36}>
      <Line s={26} vb={26} w={1.8}><path d="M1.500 10v6.500h4.500l5.500 5V5L6 10zM15 9.500c1.500 2 1.500 5 0 7M18.500 6.500c3 4 3 9 0 13M21.500 4c4.500 5.500 4.500 12.500 0 18" /></Line>
    </Cell>
    <Cell $w={36}>
      <Line s={26} vb={26} w={1.7}>
        <path d="M10.500 6.500H21a1.500 1.500 0 0 1 1.500 1.500v11.500A1.500 1.500 0 0 1 21 21H4a1.500 1.500 0 0 1-1.500-1.500V15" />
        <path d="M11.500 9.500H20v8.500H5.500V16l3-2z" fill="#fff" />
        <path d="M24.500 12v4" />
        <path d="M6 1.500L1.500 8h3L3.500 12.500 8.500 6h-3z" fill="#fff" />
      </Line>
    </Cell>
    <TrayText $w={112} $align="right" $ls={0.15}>13:17<br />12-05-2025</TrayText>
    <Cell $w={48}>
      <Line s={26} vb={26} w={1.9}>
        <path d="M14 3C8 2.500 5.500 6 5.500 10v5L3 20h19l-2-4M9.500 20.500c0 4 6.500 4 6.500 0M10.500 10h4.500l-4.500 5H15M18 3h5l-5 5.500h5" />
      </Line>
    </Cell>
    <Cell $w={17} />
  </Taskbar>
);

export default function App() {
  return (
    <Screen>
      <Global />
      <BrowserChrome />
      <Frame>
        <Page>
          <AirflowNav />
          <FilterBar />
          <StateLegend />
          <Body>
            <Grid />
            <Splitter />
            <DetailsPanel />
          </Body>
        </Page>
        <ScrollTrack>
          <svg width="15" height="11" viewBox="0 0 15 11"><path d="M7.500 1.500L13.500 10h-12z" fill="#858585" stroke="#858585" strokeWidth="2" strokeLinejoin="round" /></svg>
          <ScrollThumb />
          <svg width="15" height="11" viewBox="0 0 15 11"><path d="M7.500 9.500L13.500 1h-12z" fill="#858585" stroke="#858585" strokeWidth="2" strokeLinejoin="round" /></svg>
        </ScrollTrack>
      </Frame>
      <Gutter />
      <SystemBar />
    </Screen>
  );
}
